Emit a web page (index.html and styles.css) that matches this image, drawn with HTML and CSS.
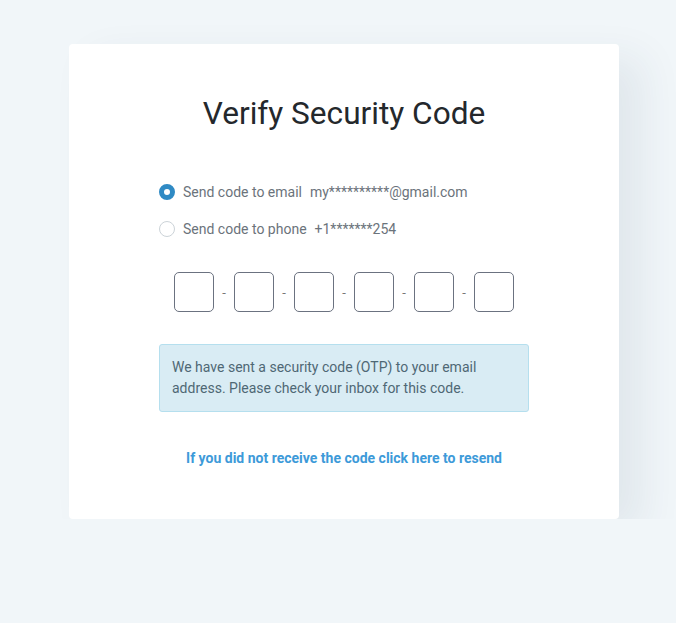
FILE: index.html
```html
<!DOCTYPE html>
<html lang="en">
<head>
<meta charset="utf-8">
<title>Verify Security Code</title>
<link rel="stylesheet" href="styles.css">
</head>
<body>
<div class="stage">
  <div class="card">
    <h1 class="title">Verify Security Code</h1>
    <div class="content">
      <label class="option">
        <span class="radio checked"></span>
        <span class="label">Send code to email</span>
        <span class="value">my**********@gmail.com</span>
      </label>
      <label class="option">
        <span class="radio"></span>
        <span class="label">Send code to phone</span>
        <span class="value">+1*******254</span>
      </label>
      <div class="otp">
        <input class="digit" type="text" maxlength="1">
        <span class="dash">-</span>
        <input class="digit" type="text" maxlength="1">
        <span class="dash">-</span>
        <input class="digit" type="text" maxlength="1">
        <span class="dash">-</span>
        <input class="digit" type="text" maxlength="1">
        <span class="dash">-</span>
        <input class="digit" type="text" maxlength="1">
        <span class="dash">-</span>
        <input class="digit" type="text" maxlength="1">
      </div>
      <div class="alert">We have sent a security code (OTP) to your email address. Please check your inbox for this code.</div>
      <a class="resend" href="#">If you did not receive the code click here to resend</a>
    </div>
  </div>
</div>
</body>
</html>
```
FILE: styles.css
```css
html, body {
  margin: 0;
  padding: 0;
  background: #f1f6f9;
  font-family: Roboto, "Liberation Sans", Arial, sans-serif;
}
.stage {
  padding: 44px 0 0 69px;
  height: 475px;
  overflow: hidden;
}
.card {
  width: 550px;
  height: 475px;
  background: #fff;
  border-radius: 4px;
  box-shadow: 24px 14px 40px rgba(40, 70, 90, 0.08);
  box-sizing: border-box;
  padding-top: 51px;
}
.title {
  margin: 0;
  text-align: center;
  font-weight: 400;
  font-size: 31.6px;
  line-height: 38px;
  color: #24282c;
}
.content {
  width: 370px;
  margin: 49px auto 0;
  display: flex;
  flex-direction: column;
}
.option {
  display: flex;
  align-items: center;
  height: 20px;
  font-size: 14px;
  color: #6b737b;
  margin-bottom: 17px;
}
.radio {
  width: 16px;
  height: 16px;
  box-sizing: border-box;
  border-radius: 50%;
  border: 1px solid #ccd3d8;
  margin-right: 8px;
  background: #fff;
}
.radio.checked {
  border: 5px solid #2f8ac4;
}
.value {
  margin-left: 8px;
}
.otp {
  display: flex;
  justify-content: center;
  align-items: center;
  margin-top: 16px;
}
.digit {
  width: 40px;
  height: 40px;
  box-sizing: border-box;
  border: 1px solid #6b7280;
  border-radius: 5px;
  padding: 0;
  margin: 0;
  background: #fff;
  text-align: center;
  font-size: 18px;
}
.dash {
  width: 20px;
  text-align: center;
  font-size: 13px;
  color: #777;
}
.alert {
  margin-top: 32px;
  box-sizing: border-box;
  height: 68px;
  padding: 12px 12px;
  background: #d9ecf4;
  border: 1px solid #b5dfee;
  border-radius: 3px;
  font-size: 14px;
  line-height: 21px;
  color: #4f6875;
}
.resend {
  margin-top: 38px;
  text-align: center;
  font-size: 14px;
  font-weight: 700;
  color: #3d9ad9;
  text-decoration: none;
}
```
